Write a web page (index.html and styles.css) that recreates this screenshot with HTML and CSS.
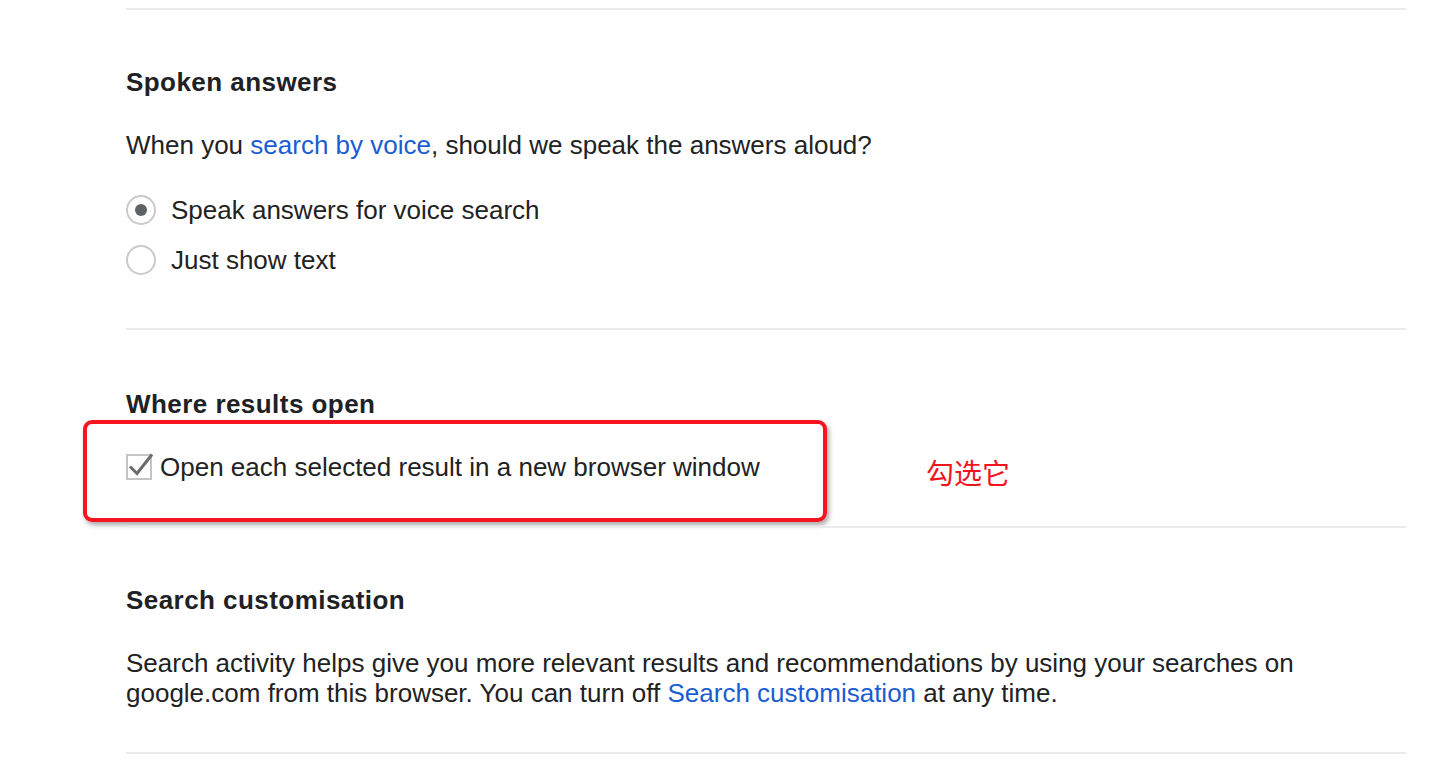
FILE: index.html
```html
<!DOCTYPE html>
<html lang="en">
<head>
  <meta charset="UTF-8">
  <meta name="viewport" content="width=device-width, initial-scale=1.0">
  <title>Search settings</title>
  <link rel="stylesheet" href="styles.css">
</head>
<body>
  <div class="page">
    <!-- Spoken answers -->
    <section class="block block-first">
      <h2>Spoken answers</h2>
      <p class="text">When you <a href="#">search by voice</a>, should we speak the answers aloud?</p>
      <div class="options">
        <label class="option"><span class="radio checked"></span>Speak answers for voice search</label>
        <label class="option"><span class="radio"></span>Just show text</label>
      </div>
    </section>

    <!-- Where results open -->
    <section class="block block-results">
      <h2>Where results open</h2>
      <label class="check-row">
        <svg class="checkbox" width="30" height="30" viewBox="0 0 30 30">
          <rect x="1" y="4" width="24" height="24" fill="#fff" stroke="#c4c4c4" stroke-width="2"/>
          <path d="M4 15.5 L11 22.5 L26 3.5" fill="none" stroke="#6b6b6b" stroke-width="3"/>
        </svg>
        Open each selected result in a new browser window
      </label>
      <div class="highlight"></div>
      <div class="note">勾选它</div>
    </section>

    <!-- Search customisation -->
    <section class="block block-last">
      <h2>Search customisation</h2>
      <p class="text">Search activity helps give you more relevant results and recommendations by using your searches on google.com from this browser. You can turn off <a href="#">Search customisation</a> at any time.</p>
    </section>
  </div>
</body>
</html>
```

FILE: styles.css
```css
body {
  margin: 0;
  background: #fff;
  color: #222;
  font-family: "Liberation Sans", Arial, sans-serif;
}

.page {
  margin-left: 126px;
  width: 1280px;
  padding-top: 8px;
}

/* sections */
.block {
  position: relative;
  border-top: 2px solid #ebebeb;
  padding: 57px 0 44px;
}

.block-first {
  padding-bottom: 53px;
}

.block-results {
  padding-top: 59px;
}

.block-last {
  border-bottom: 2px solid #ebebeb;
}

h2 {
  margin: 0;
  font-size: 26px;
  line-height: 30px;
  font-weight: bold;
  letter-spacing: 0.45px;
  color: #202124;
}

.text {
  margin: 33px 0 0;
  font-size: 26px;
  line-height: 30px;
}

.text a {
  color: #1a5dd0;
  text-decoration: none;
}

/* radio options */
.options {
  margin-top: 35px;
  display: flex;
  flex-direction: column;
  gap: 20px;
}

.option {
  display: flex;
  align-items: center;
  gap: 15px;
  font-size: 26px;
  line-height: 30px;
}

.radio {
  width: 26px;
  height: 26px;
  border: 2px solid #cacaca;
  border-radius: 50%;
  display: flex;
  align-items: center;
  justify-content: center;
  flex-shrink: 0;
}

.radio.checked::after {
  content: "";
  width: 12px;
  height: 12px;
  border-radius: 50%;
  background: #5f6368;
}

/* checkbox */
.check-row {
  margin-top: 33px;
  display: flex;
  align-items: center;
  gap: 4px;
  font-size: 26px;
  line-height: 30px;
}

.checkbox {
  flex-shrink: 0;
  margin-top: -2px;
}

/* annotation */
.highlight {
  position: absolute;
  left: -43px;
  top: 90px;
  width: 736px;
  height: 94px;
  border: 4px solid #f5141f;
  border-radius: 9px;
  box-shadow: 2px 3px 5px rgba(0, 0, 0, 0.35);
}

.note {
  position: absolute;
  left: 800px;
  top: 127px;
  font-family: "Noto Sans CJK SC", sans-serif;
  font-size: 28px;
  line-height: 30px;
  color: #f0141e;
}
```
